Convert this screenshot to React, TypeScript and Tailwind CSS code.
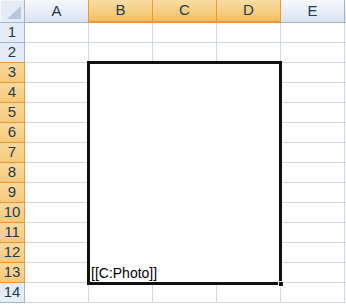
import React from "react";

const cols = ["A", "B", "C", "D", "E"];
const rows = Array.from({ length: 14 }, (_, i) => i + 1);

// selection: B3:D13 (merged)
const selCols = ["B", "C", "D"];
const isSelRow = (r: number) => r >= 3 && r <= 13;

export default function App() {
  return (
    <div className="w-[346px] h-[305px] bg-white overflow-hidden font-['Liberation_Sans',Arial,sans-serif]">
      <div className="grid grid-cols-[25px_64px_64px_64px_64px_64px_1fr] grid-rows-[23px_repeat(14,20px)]">
        {/* corner */}
        <div className="relative bg-[#e4ecf7] border-r border-b border-[#9eb6ce]">
          <div className="absolute inset-0 border border-t-[#f4f7fb] border-l-[#f4f7fb] border-r-transparent border-b-transparent" />
          <svg className="absolute right-[3px] bottom-[3px]" width="14" height="13" viewBox="0 0 14 13">
            <polygon points="14,0 14,13 0,13" fill="#b6c6db" />
          </svg>
        </div>

        {/* column headers */}
        {cols.map((c) =>
          selCols.includes(c) ? (
            <div
              key={c}
              className="flex items-center justify-center bg-gradient-to-b from-[#f9dca5] to-[#f1c15f] border-r border-b-2 border-[#f29536] text-[15px] text-[#1e3a52]"
            >
              {c}
            </div>
          ) : (
            <div
              key={c}
              className={`flex items-center justify-center bg-gradient-to-b from-[#f5f8fc] to-[#dce4ef] border-b border-[#9eb6ce] border-r text-[15px] text-[#1e3a52] ${
                c === "A" ? "border-r-[#f29536]" : "border-r-[#9eb6ce]"
              }`}
            >
              {c}
            </div>
          )
        )}
        <div className="bg-gradient-to-b from-[#f5f8fc] to-[#dce4ef] border-b border-[#9eb6ce]" />

        {rows.map((r) => (
          <React.Fragment key={r}>
            <div
              className={`flex items-center justify-center border-r border-b text-[15px] text-[#1e3a52] ${
                isSelRow(r)
                  ? "bg-gradient-to-b from-[#f9d99c] to-[#f6c978] border-[#f29536]"
                  : r === 2
                  ? "bg-[#e4ecf7] border-r-[#9eb6ce] border-b-[#f29536]"
                  : "bg-[#e4ecf7] border-[#9eb6ce]"
              }`}
            >
              {r}
            </div>
            {cols.map((c) =>
              isSelRow(r) && selCols.includes(c) ? null : (
                <div key={c} className="border-r border-b border-[#d0d7e5]" />
              )
            )}
            <div className="border-b border-[#d0d7e5]" />
          </React.Fragment>
        ))}

        {/* merged cell B3:D13 */}
        <div className="relative col-start-3 col-span-3 row-start-4 row-span-11 bg-white flex items-end px-[2px] pb-[1px]">
          <span className="text-[14px] leading-[18px] text-black">[[C:Photo]]</span>
          <div className="absolute -top-[2px] -left-[2px] -right-[1px] -bottom-[2px] border-[3px] border-[#111]" />
          <div className="absolute -right-[3px] -bottom-[4px] w-[6px] h-[6px] bg-[#111] border border-white" />
        </div>
      </div>
    </div>
  );
}
